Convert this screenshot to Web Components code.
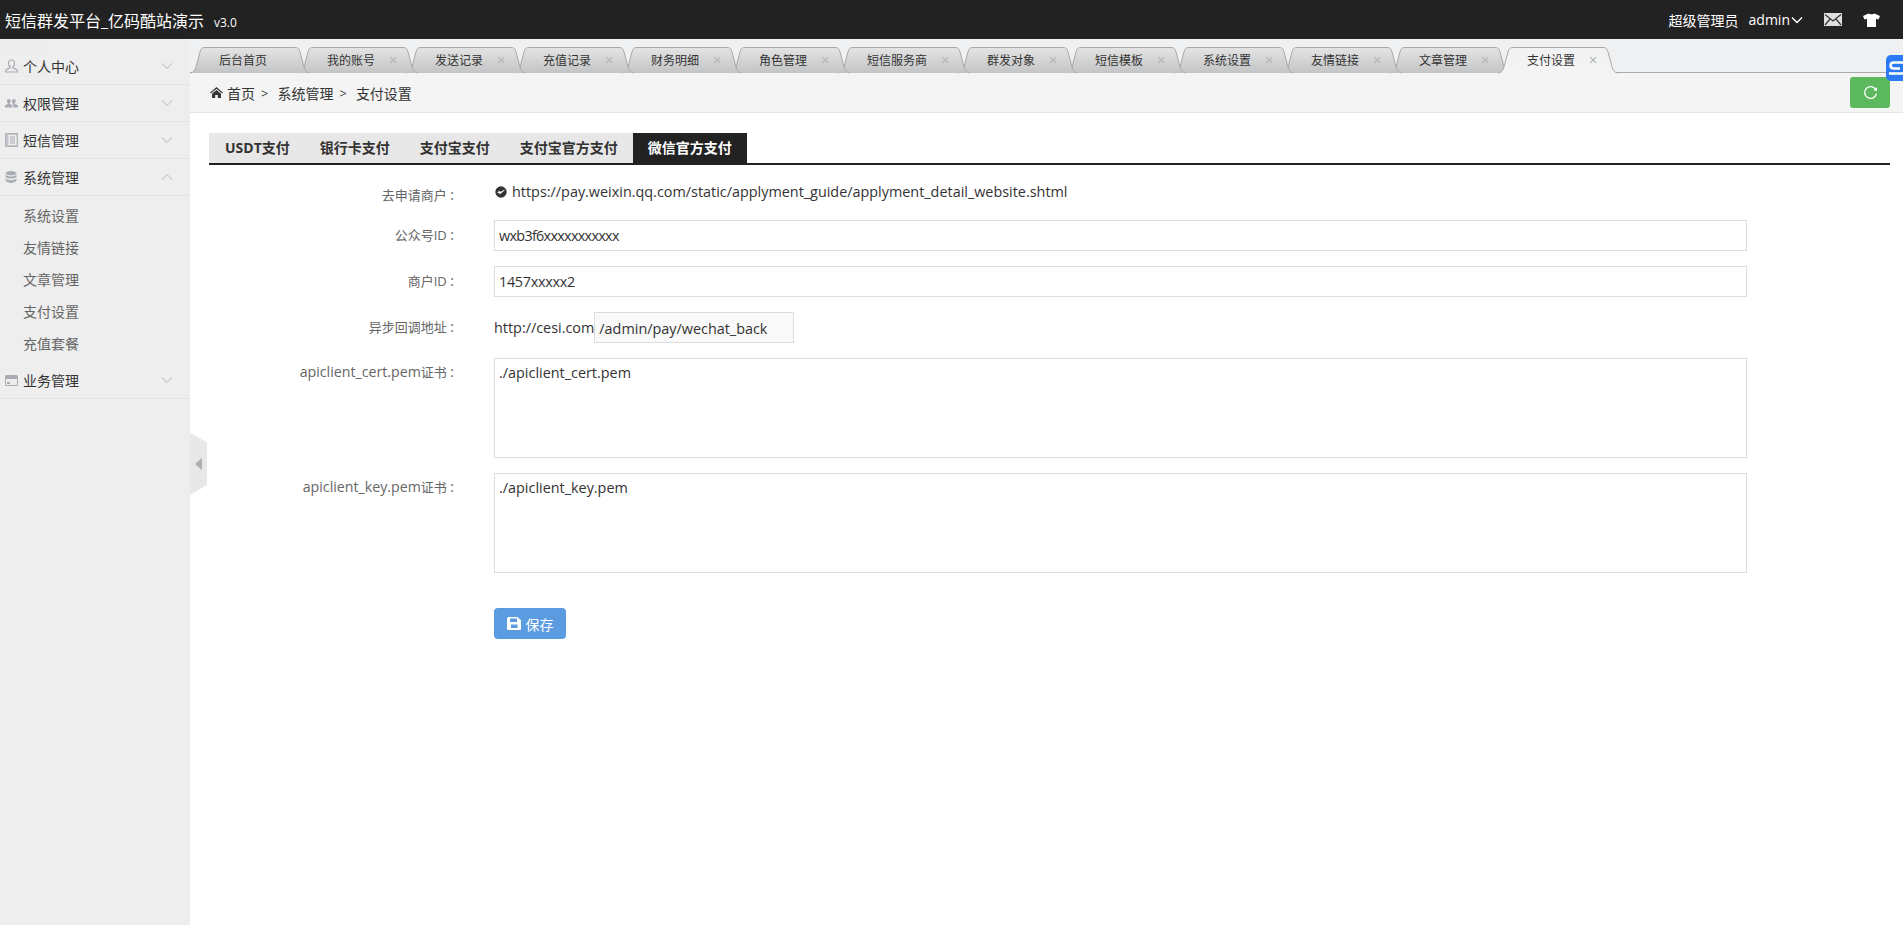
<!DOCTYPE html>
<html lang="zh">
<head>
<meta charset="utf-8">
<title>支付设置</title>
<style>
    html, body { margin: 0; height: 100%; }
    body {
        font-family: "Open Sans", "Noto Sans CJK SC", sans-serif;
        font-size: 14px;
        color: #333;
        background: #fff;
        overflow: hidden;
    }
</style>
</head>
<body>
<admin-shell>
    <top-bar slot="top"></top-bar>

    <side-menu slot="side">
        <menu-group label="个人中心" icon="user"></menu-group>
        <menu-group label="权限管理" icon="group"></menu-group>
        <menu-group label="短信管理" icon="book"></menu-group>
        <menu-group label="系统管理" icon="db" open>
            <a>系统设置</a>
            <a>友情链接</a>
            <a>文章管理</a>
            <a>支付设置</a>
            <a>充值套餐</a>
        </menu-group>
        <menu-group label="业务管理" icon="card"></menu-group>
    </side-menu>

    <tab-strip slot="tabs">
        <page-tab fixed>后台首页</page-tab>
        <page-tab>我的账号</page-tab>
        <page-tab>发送记录</page-tab>
        <page-tab>充值记录</page-tab>
        <page-tab>财务明细</page-tab>
        <page-tab>角色管理</page-tab>
        <page-tab>短信服务商</page-tab>
        <page-tab>群发对象</page-tab>
        <page-tab>短信模板</page-tab>
        <page-tab>系统设置</page-tab>
        <page-tab>友情链接</page-tab>
        <page-tab>文章管理</page-tab>
        <page-tab active>支付设置</page-tab>
    </tab-strip>

    <crumb-bar slot="crumbs"></crumb-bar>

    <pay-panel slot="main">
        <form-row label="去申请商户" kind="link">
            <svg slot="icon" width="12" height="12" viewBox="0 0 11 11"><circle cx="5.5" cy="5.5" r="5.2" fill="#333"/><path d="M2.5 6l2.300 1 3.800-3.200-3.600 1.700-1.300-.8z" fill="#fff" stroke="#fff" stroke-width=".5"/></svg>
            https://pay.weixin.qq.com/static/applyment_guide/applyment_detail_website.shtml
        </form-row>
        <form-row label="公众号ID" kind="input" style="--ls:-.7px">wxb3f6xxxxxxxxxxx</form-row>
        <form-row label="商户ID" kind="input" style="--ls:-.3px">1457xxxxx2</form-row>
        <form-row label="异步回调地址" kind="suffix" prefix="http://cesi.com">/admin/pay/wechat_back</form-row>
        <form-row label="apiclient_cert.pem证书" kind="area">./apiclient_cert.pem</form-row>
        <form-row label="apiclient_key.pem证书" kind="area">./apiclient_key.pem</form-row>
        <form-row kind="action"><save-button>保存</save-button></form-row>
    </pay-panel>
</admin-shell>

<script>
    const ICONS = {
        user: '<svg width="13" height="14" viewBox="0 0 13 14" fill="none" stroke="#a9adb3" stroke-width="1.2"><path d="M6.5 1c1.9 0 3 1.3 3 3.2 0 1.500-.7 2.800-1.600 3.500v1.200l3.300 1.500c.8.4 1.100.8 1.100 1.600v1H.7v-1c0-.8.3-1.200 1.100-1.600l3.300-1.500V7.700C4.200 7 3.500 5.700 3.500 4.200 3.500 2.300 4.600 1 6.500 1z"/></svg>',
        group: '<svg width="13" height="10" viewBox="0 0 13 10" fill="#a9adb3"><path d="M3.800 1c1.200 0 1.900.9 1.900 2 0 .9-.4 1.700-1 2.100v.8L7.500 7.300V9.500H0V7.300l2.900-1.400v-.8c-.6-.4-1-1.200-1-2.100 0-1.100.7-2 1.900-2z"/><path d="M8.800 1c1.200 0 1.900.9 1.900 2 0 .9-.4 1.700-1 2.100v.8L13 7.300V9.500H8.500V6.900L7 6c.5-.2.900-.3.9-.9-.6-.4-1-1.200-1-2.100C6.900 1.900 7.600 1 8.800 1z"/></svg>',
        book: '<svg width="13" height="14" viewBox="0 0 13 14" fill="none"><rect x=".5" y=".5" width="12" height="13" fill="#c3c6ca" stroke="#b0b3b8"/><rect x="3.500" y="2" width="8" height="10" fill="#eee"/><path d="M5 4h5M5 6h5M5 8h5M5 10h5" stroke="#a9adb3"/></svg>',
        db: '<svg width="12" height="12" viewBox="0 0 12 12" fill="#a9adb3"><ellipse cx="6" cy="2.200" rx="5.500" ry="2.200"/><path d="M.5 3.600c1 1.300 3 1.800 5.500 1.800s4.500-.5 5.500-1.800v2.100C10.500 7 8.500 7.500 6 7.500S1.500 7 .5 5.700z"/><path d="M.5 7.200C1.500 8.500 3.500 9 6 9s4.500-.5 5.500-1.800v2.300C10.500 11 8.500 12 6 12s-4.500-1-5.500-2.500z"/></svg>',
        card: '<svg width="13" height="11" viewBox="0 0 13 11"><rect width="13" height="11" rx="1.500" fill="#a9adb3"/><rect x="1" y="4" width="11" height="6" fill="#eee"/><rect x="2" y="7" width="3" height="2" fill="#a9adb3"/></svg>'
    };

    class AdminShell extends HTMLElement {
        constructor() {
            super();
            this.attachShadow({ mode: "open" });
        }

        connectedCallback() {
            this.shadowRoot.innerHTML = `
                <style>
                    :host { display: flex; flex-direction: column; height: 925px; position: relative; }
                    .body { flex: 1; display: flex; min-height: 0; }
                    .main { flex: 1; min-width: 0; display: flex; flex-direction: column; position: relative; }
                    /* sidebar handle, lies over the page */
                    .handle { position: absolute; left: 0; top: 394px; width: 17px; height: 62px; background: #e8e8e8;
                        clip-path: polygon(0 0, 100% 15%, 100% 84%, 0 100%); }
                    .handle::after { content: ""; position: absolute; left: 5px; top: 25px; border: 6.500px solid transparent;
                        border-left: 0; border-right: 7px solid #aeaeae; }
                    /* floating widget at the window edge */
                    .widget { position: absolute; right: 0; top: 55px; width: 17px; height: 26px; background: #2b7bf6;
                        border-radius: 5px 0 0 5px; overflow: hidden; z-index: 50; }
                    svg { display: block; }
                </style>
                <slot name="top"></slot>
                <div class="body">
                    <slot name="side"></slot>
                    <div class="main">
                        <slot name="tabs"></slot>
                        <slot name="crumbs"></slot>
                        <slot name="main"></slot>
                        <div class="handle"></div>
                    </div>
                </div>
                <div class="widget">
                    <svg width="17" height="26" viewBox="0 0 17 26" fill="none" stroke="#fff" stroke-width="2.400">
                        <path d="M17 7.500H8Q4.500 7.500 4.500 10.500T8 13.500H14"/>
                        <path d="M3 18.500H17"/>
                    </svg>
                </div>
            `;
        }
    }

    class TopBar extends HTMLElement {
        constructor() {
            super();
            this.attachShadow({ mode: "open" });
        }

        connectedCallback() {
            this.shadowRoot.innerHTML = `
                <style>
                    :host { display: flex; align-items: center; justify-content: space-between; height: 39px;
                        background: #222; color: #fff; padding: 0 23px 0 5px; }
                    .brand { font-size: 16px; }
                    .ver { font-size: 12px; margin-left: 10px; }
                    .right { display: flex; align-items: center; }
                    .role { font-size: 14px; }
                    .name { margin-left: 10px; font-size: 14px; }
                    .chev { margin-left: 1px; }
                    .mail { margin-left: 21px; }
                    .shirt { margin-left: 21px; }
                    svg { display: block; }
                </style>
                <div><span class="brand">短信群发平台_亿码酷站演示</span><span class="ver">v3.0</span></div>
                <div class="right">
                    <span class="role">超级管理员</span>
                    <span class="name">admin</span>
                    <svg class="chev" width="12" height="8" viewBox="0 0 12 8" fill="none" stroke="#fff" stroke-width="1.400"><path d="M1 1.500l5 5 5-5"/></svg>
                    <svg class="mail" width="18" height="13" viewBox="0 0 18 13"><rect width="18" height="13" fill="#e0e0e0"/><path d="M1 1.500l8 6.500 8-6.500M1 12l5.500-6.500M17 12l-5.500-6.500" fill="none" stroke="#333" stroke-width="1.200"/></svg>
                    <svg class="shirt" width="17" height="14" viewBox="0 0 17 14" fill="#fff"><path d="M5.500 .5c1 1 5 1 6 0L17 3l-1.500 3.500-2.500-.8V14H4V5.700l-2.500.8L0 3z"/></svg>
                </div>
            `;
        }
    }

    class SideMenu extends HTMLElement {
        constructor() {
            super();
            this.attachShadow({ mode: "open" });
        }

        connectedCallback() {
            this.shadowRoot.innerHTML = `
                <style>
                    :host { display: block; width: 190px; flex: none; box-sizing: border-box; height: 100%;
                        background: #eee; padding-top: 9px; position: relative; overflow: hidden; }
                    .ghost { position: absolute; left: 0; top: 1px; font-size: 12px; line-height: 21px; color: #ebebeb; }
                </style>
                <div class="ghost">关闭当前<br>关闭全部</div>
                <slot></slot>
            `;
        }
    }

    class MenuGroup extends HTMLElement {
        constructor() {
            super();
            this.attachShadow({ mode: "open" });
        }

        connectedCallback() {
            const open = this.hasAttribute("open");
            const arrow = open ? "M1 6.500l5-5 5 5" : "M1 1.500l5 5 5-5";
            this.shadowRoot.innerHTML = `
                <style>
                    :host { display: block; position: relative; }
                    .head { display: flex; align-items: center; height: 36px; border-bottom: 1px solid #e3e3e3; color: #333; }
                    .ico { width: 23px; display: flex; justify-content: center; padding-right: 1px; box-sizing: border-box; }
                    .label { flex: 1; }
                    .chev { margin-right: 17px; display: block; }
                    .sub { padding: 4px 0 2px; }
                    ::slotted(a) { display: block; height: 32px; line-height: 32px; padding-left: 23px; color: #666; }
                </style>
                <div class="head">
                    <span class="ico">${ICONS[this.getAttribute("icon")]}</span>
                    <span class="label">${this.getAttribute("label")}</span>
                    <svg class="chev" width="12" height="8" viewBox="0 0 12 8" fill="none" stroke="#ccc" stroke-width="1.200"><path d="${arrow}"/></svg>
                </div>
                ${open ? '<div class="sub"><slot></slot></div>' : ""}
            `;
        }
    }

    class TabStrip extends HTMLElement {
        constructor() {
            super();
            this.attachShadow({ mode: "open" });
        }

        connectedCallback() {
            this.shadowRoot.innerHTML = `
                <style>
                    :host { display: flex; height: 34px; box-sizing: border-box; padding-top: 8px; flex: none;
                        background: #eef0f1; border-bottom: 1px solid #aaa; }
                    .row { display: flex; height: 26px; }
                </style>
                <div class="row"><slot></slot></div>
            `;
        }
    }

    class PageTab extends HTMLElement {
        constructor() {
            super();
            this.attachShadow({ mode: "open" });
        }

        connectedCallback() {
            const active = this.hasAttribute("active");
            const w = this.textContent.trim().length * 12 + 72;
            const h = 26;
            const index = [...this.parentNode.children].indexOf(this);
            this.style.zIndex = active ? 100 : 50 - index;
            this.style.marginLeft = index ? "-12px" : "0";
            this.style.width = w + "px";
            const edge = `M.5 ${h}C4 25.500 5.500 22 6.500 18L10 5C11 1.500 12.500 .5 15 .5L${w - 15} .5C${w - 12.500} .5 ${w - 11} 1.500 ${w - 10} 5L${w - 6.500} 18C${w - 5.500} 22 ${w - 4} 25.500 ${w - .5} ${h}`;
            this.shadowRoot.innerHTML = `
                <style>
                    :host { display: flex; align-items: center; position: relative; height: ${h}px; flex: none;
                        padding-left: 29px; box-sizing: border-box; font-size: 12px; color: #333; }
                    svg { position: absolute; left: 0; top: 0; }
                    .text, .x { position: relative; }
                    .x { margin-left: 13px; width: 10px; text-align: center; color: #b5b5b5; font-size: 15px;
                        line-height: 14px; font-family: "Liberation Sans", sans-serif; }
                </style>
                <svg width="${w}" height="${h + 1}" viewBox="0 0 ${w} ${h + 1}">
                    <defs>
                        <linearGradient id="g" x1="0" y1="0" x2="0" y2="1">
                            <stop offset="0" stop-color="${active ? "#f1f2f3" : "#e4e4e4"}"/>
                            <stop offset="1" stop-color="${active ? "#f4f4f4" : "#c3c4c5"}"/>
                        </linearGradient>
                    </defs>
                    <path d="${edge}${active ? "V27H.5Z" : "Z"}" fill="url(#g)" stroke="none"/>
                    <path d="${edge}" fill="none" stroke="#a8a8a8"/>
                </svg>
                <span class="text"><slot></slot></span>
                ${this.hasAttribute("fixed") ? "" : '<span class="x">×</span>'}
            `;
        }
    }

    class CrumbBar extends HTMLElement {
        constructor() {
            super();
            this.attachShadow({ mode: "open" });
        }

        connectedCallback() {
            this.shadowRoot.innerHTML = `
                <style>
                    :host { display: flex; align-items: center; height: 40px; box-sizing: border-box; flex: none;
                        background: #f4f4f4; border-bottom: 1px solid #e5e5e5; padding: 0 13px 0 20px; color: #333; }
                    .home { margin-right: 4px; display: block; }
                    .sep { margin: 0 9px 0 6px; color: #444; font-size: 13px; }
                    .refresh { margin-left: auto; width: 40px; height: 31px; background: #5cb85c; border-radius: 3px;
                        display: flex; align-items: center; justify-content: center; margin-bottom: 1px; }
                </style>
                <svg class="home" width="13" height="11" viewBox="0 0 13 11" fill="#333"><path d="M6.500 0L13 5.700l-.8.9L6.500 1.800.8 6.600 0 5.700z"/><path d="M2 6.800L6.500 3 11 6.800V11H7.800V8H5.200v3H2z"/></svg>
                <span>首页</span><span class="sep">&gt;</span>
                <span>系统管理</span><span class="sep">&gt;</span>
                <span>支付设置</span>
                <div class="refresh">
                    <svg width="15" height="15" viewBox="0 0 14 14" fill="none" stroke="#fff" stroke-width="1.300"><path d="M12 4.500A5.500 5.500 0 1 0 12.500 8"/><path d="M9.800 5.200l3.200.2.100-3.200" stroke="none" fill="#fff"/></svg>
                </div>
            `;
        }
    }

    class PayPanel extends HTMLElement {
        constructor() {
            super();
            this.attachShadow({ mode: "open" });
        }

        connectedCallback() {
            this.shadowRoot.innerHTML = `
                <style>
                    :host { display: block; padding: 20px 13px 0 19px; background: #fff; flex: 1; }
                    .tabs { display: flex; background: #e7e7e7; height: 30px; border-bottom: 2px solid #222; margin-bottom: 15px; }
                    .tabs span { padding: 0 15px; line-height: 30px; font-weight: 700; font-size: 14px; color: #333; }
                    .tabs span:first-child { padding-left: 16px; }
                    .tabs span.on { background: #222; color: #fff; height: 32px; box-sizing: border-box; }
                    .fill { flex: 1; background: #fff; }
                </style>
                <div class="tabs">
                    <span>USDT支付</span><span>银行卡支付</span><span>支付宝支付</span><span>支付宝官方支付</span><span class="on">微信官方支付</span>
                    <div class="fill"></div>
                </div>
                <slot></slot>
            `;
        }
    }

    class FormRow extends HTMLElement {
        constructor() {
            super();
            this.attachShadow({ mode: "open" });
        }

        connectedCallback() {
            const kind = this.getAttribute("kind");
            const label = (this.getAttribute("label") || "").replace(/[a-z_.]{3,}/, (m) => `<span class="lat">${m}</span>`);
            let value = '<slot></slot>';
            if (kind === "link") value = '<div class="link"><slot name="icon"></slot><span><slot></slot></span></div>';
            if (kind === "input") value = '<div class="box"><slot></slot></div>';
            if (kind === "area") value = '<div class="box area"><slot></slot></div>';
            if (kind === "suffix") {
                value = `<div class="suffix"><span>${this.getAttribute("prefix")}</span><div class="ro"><slot></slot></div></div>`;
            }
            this.shadowRoot.innerHTML = `
                <style>
                    :host { display: flex; margin-bottom: 15px; font-size: 14.400px; }
                    :host([kind="action"]) { margin-top: 35px; }
                    .label { width: 285px; flex: none; box-sizing: border-box; padding-right: 40px; text-align: right; color: #666;
                        font-size: 13px; line-height: 30px; }
                    .lat { font-size: 14.200px; }
                    .colon { margin-left: 3.500px; font-size: 14px; }
                    .value { flex: none; width: 1253px; }
                    .box { box-sizing: border-box; height: 31px; border: 1px solid #ddd; padding: 0 4px; line-height: 29px; color: #333;
                        letter-spacing: var(--ls, 0); }
                    .area { height: 100px; white-space: pre-wrap; line-height: 22px; padding-top: 3px; }
                    .link { display: flex; align-items: center; gap: 5px; height: 25px; margin: -1px 0 0 1px; color: #333; }
                    .suffix { display: flex; align-items: center; height: 31px; }
                    .ro { width: 200px; height: 31px; box-sizing: border-box; border: 1px solid #ddd; background: #f9f9f9;
                        padding: 0 4px; line-height: 31px; color: #333; }
                    :host([kind="link"]) .label { height: 25px; line-height: 29px; }
                    :host([kind="area"]) .label { line-height: 28px; }
                </style>
                <div class="label">${label}${label ? '<span class="colon">:</span>' : ""}</div>
                <div class="value">${value}</div>
            `;
        }
    }

    class SaveButton extends HTMLElement {
        constructor() {
            super();
            this.attachShadow({ mode: "open" });
        }

        connectedCallback() {
            this.shadowRoot.innerHTML = `
                <style>
                    :host { display: inline-flex; align-items: center; justify-content: center; gap: 5px; width: 72px; height: 31px;
                        background: #5b9bdf; border-radius: 4px; color: #fff; font-size: 14px; vertical-align: top; }
                    svg { display: block; }
                </style>
                <svg width="14" height="13" viewBox="0 0 14 13"><path fill="#fff" d="M1.500 0H10.500L14 3.200V11.500Q14 13 12.500 13H1.500Q0 13 0 11.500V1.500Q0 0 1.500 0z"/><rect x="3" y="1.500" width="7" height="3.500" fill="#5b9bdf"/><rect x="4" y="7.500" width="6.500" height="3.500" fill="#5b9bdf"/></svg>
                <span><slot></slot></span>
            `;
        }
    }

    customElements.define("admin-shell", AdminShell);
    customElements.define("top-bar", TopBar);
    customElements.define("side-menu", SideMenu);
    customElements.define("menu-group", MenuGroup);
    customElements.define("tab-strip", TabStrip);
    customElements.define("page-tab", PageTab);
    customElements.define("crumb-bar", CrumbBar);
    customElements.define("pay-panel", PayPanel);
    customElements.define("form-row", FormRow);
    customElements.define("save-button", SaveButton);
</script>
</body>
</html>
